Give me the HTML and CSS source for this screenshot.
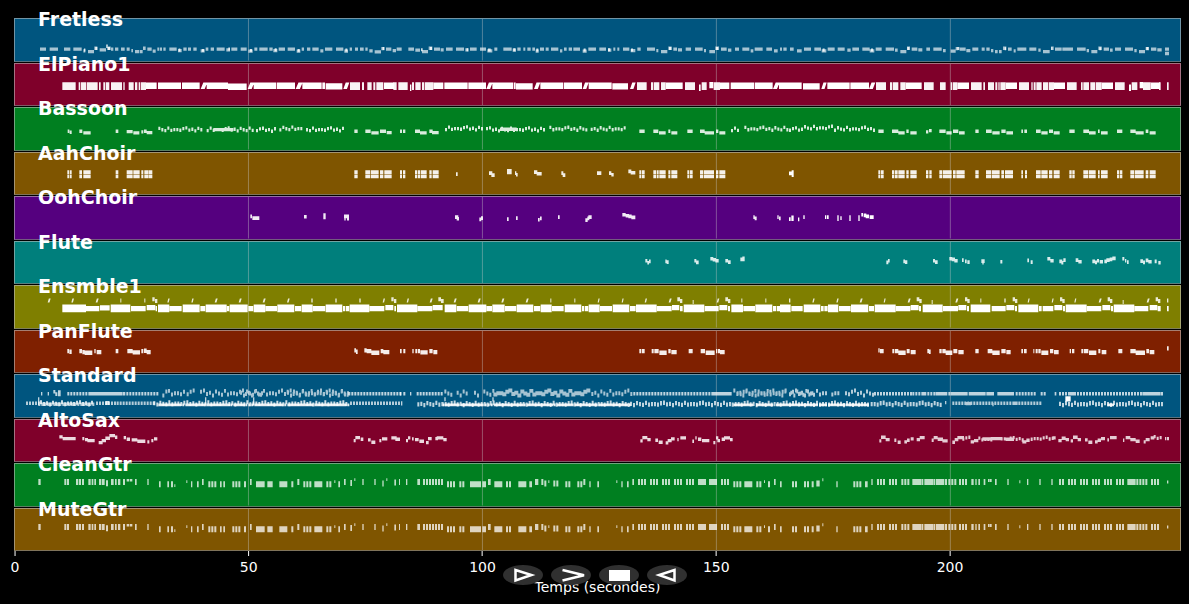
FILE: index.html
```html
<!DOCTYPE html>
<html lang="fr">
  <head>
    <meta charset="UTF-8" />
    <meta name="viewport" content="width=device-width, initial-scale=1.0" />
    <title>Pistes MIDI</title>
    <link rel="stylesheet" href="styles.css">
  </head>
  <body>
    <main class="tracks" id="tracks"></main>

    <footer class="axis">
      <div class="ticks" id="ticks"></div>
      <div class="axis-title">Temps (secondes)</div>
      <div class="controls">
        <button class="control" aria-label="Lecture">
          <svg viewBox="0 0 40 20"><path d="M12.500 5L28.500 10L12.500 15.500Z" /></svg>
        </button>
        <button class="control" aria-label="Avance rapide">
          <svg viewBox="0 0 40 20"><path d="M11.500 5L33 10.200L11.500 15.500" /></svg>
        </button>
        <button class="control" aria-label="Stop">
          <svg viewBox="0 0 40 20"><rect x="10" y="5" width="21" height="11" /></svg>
        </button>
        <button class="control" aria-label="Retour">
          <svg viewBox="0 0 40 20"><path d="M27.500 5L12 10L27.500 15.500Z" /></svg>
        </button>
      </div>
    </footer>

    <script src="script.js"></script>
  </body>
</html>
```
FILE: styles.css
```css
* {
  box-sizing: border-box;
}

body {
  display: flex;
  flex-direction: column;
  height: 100vh;
  margin: 0;
  padding: 18px 8px 0 14px;
  background-color: #000;
  color: #fff;
  font-family: "DejaVu Sans", sans-serif;
  font-size: 14px;
}

.tracks {
  flex: 1;
  min-height: 0;
  display: flex;
  flex-direction: column;
  gap: 1px;
}

.track {
  position: relative;
  flex: 1;
  min-height: 0;
  display: flex;
  flex-direction: column;
  border: 1px solid rgba(190, 190, 190, 0.6);
  border-bottom-color: rgba(128, 128, 128, 0.7);
}

.track-name {
  position: absolute;
  z-index: 1;
  top: -11px;
  left: 23px;
  margin: 0;
  font-size: 19px;
  line-height: 22px;
  font-weight: bold;
}

.notes {
  flex: 1;
  min-height: 0;
  width: 100%;
  display: block;
  fill: #fff;
}

.grid-line {
  fill: rgba(200, 200, 200, 0.4);
}

.blue {
  background-color: #00557f;
}

.red {
  background-color: #7f002a;
}

.green {
  background-color: #007f20;
}

.brown {
  background-color: #7f5500;
}

.purple {
  background-color: #55007f;
}

.teal {
  background-color: #007f7c;
}

.olive {
  background-color: #7f7f00;
}

.rust {
  background-color: #7f2000;
}

.axis {
  position: relative;
  height: 53px;
  flex-shrink: 0;
}

.ticks {
  position: relative;
  height: 28px;
  margin-left: 1px;
}

.tick {
  position: absolute;
  top: 0;
  display: flex;
  flex-direction: column;
  align-items: center;
  transform: translateX(-50%);
  line-height: 16px;
}

.tick::before {
  content: "";
  width: 1px;
  height: 5px;
  margin-bottom: 3px;
  background-color: #fff;
}

.axis-title {
  line-height: 16px;
  text-align: center;
}

.controls {
  position: absolute;
  top: 14px;
  left: -14px;
  right: -8px;
  display: flex;
  justify-content: center;
  gap: 8px;
}

.control {
  width: 40px;
  height: 20px;
  padding: 0;
  border: none;
  border-radius: 50%;
  background-color: #303030;
  cursor: pointer;
}

.control svg {
  display: block;
  width: 40px;
  height: 20px;
}

.control path {
  fill: none;
  stroke: #fff;
  stroke-width: 2.5;
}

.control rect {
  fill: #fff;
}
```
FILE: script.js
```js
// Time scale: 14.04 units per second, origin at 42.
const START = 45;
const WIDTH = 3495;
const HEIGHT = 125;
const DURATION = 249.4;

// The last section of the song, earlier lanes stop here.
const LAST_SECTION = 2367;

// Lane: [offset, y, height, notes, wave, opacity]
// a-b is one held note, a~b is a run of short notes, +n / -n shifts it down / up.
const gtr = [
  [0, 45, 18, "115-122 193-199 201-207 228-235 237-243 246-252 265-272 275-280 283-288 297-304 306-314 318-324+4 333-341 345-350 354-361 369-375 405-410 442-446 477-482+7 502-507+7 513-519+7 573-577+7 591-596+7 606-611 625~650+7 660-665+7 670-675+7 697~722+7 732-738+7 750-755 768~795+7 770-794+7 802~818+7 803-818+7 838~862+7 839-862+7 874-880+7 892-898 910~932+7 943~962+7 944-962+7 979~997+7 1015-1020+7 1032-1037 1051-1056+3 1087-1091 1123-1127 1147-1151+5 1183-1188+2 1197-1200", 0, 0.75],
  [0, 45, 8, "380-387 389-397 559-562+4 1003-1006+4 1063-1066-2 1159-1162-2 523-526+16", 0, 0.75],
  [1200, 45, 18, "18-22 52-60 69~100 105~130 141~167+7 178~192+7 210~240+7 212-238+7 247-258+7 264-272 283~308+7 284-307+7 318~335+7 355~378+7 357-376+7 388-396+7 405-415 424-430 433-439+5 460~478+5 496~508+7 532~542+7 550-556 568-572+7 592-597+7 664-668+7 681-686+7 697-702 714~740 750~775 786~812 822~848 858~884 894~920 896-918 927~953 930-950 963~987 1000~1022+7 1033~1053+7 1034-1052+7 1069~1086+7 1104-1110+7 1122-1127 1140-1145+7 1176~1190+7", 0, 0.75],
  [1200, 49, 8, "445-448 649-652 1092-1095", 0, 0.75],
  [2367, 45, 18, "9~22+7 45~60+7 68-74+7 82-92+5 142-146+7 193~218+7 228-236+7 247-251 264~290 300~326 337~362 370~398 372-396 406~434 408-432 441~470 444-466 478~502 510~536 547-554 559-563 568-573 584-589 618-623 655-659 714-718 751-755 787-791 810~828 837~862 873~900 909~936 945~970 981~1008 1015~1043 1017-1040 1051~1077 1086~1110", 0, 0.75],
  [2367, 45, 9, "100-103-2 597-602 603-608 691-694+4 1134-1138+5", 0, 0.75],
];

const choirRight = "268-274 276-284 309-316 318-326 328-347 352-359 364-383 411-418 421-428 451-460 462-488 492-500 502-527 559-569 591-606 608-632 637-645 648-672 697-702 708-714 741-755 757-776 780-790 794-812 841-848 850-857 883-898 900-920 927-932 936-956 984-991 993-1000 1024-1036 1038-1064 1070-1078 1082-1100";
const choirMid = "0-6 9-16 45-52 54-60 62-80 88-95 98-116 718-724 726-734 760-768 770-776 778-797 805-811 814-832 862-868 870-878 900-910 912-942 948-955 958-976";
const choirLeft = "202-207 209-215 238-246 250-272 347-355 380-398 400-419 424-430 433-444 445-457 1063-1073 1096-1110 1112-1136 1140-1150 1153-1175";

const tracks = [
  { name: "Fretless", color: "blue", lanes: [
    [0, 86, 10, "120-138 149-174 192-211 220-245 250-256+5 264-282+7 283-292-3 299-318+2 318-324-9 324-332-3 333-340 345-355 363-374 380-389 394-399+4 405-418+7 420-428+7 429-437-3 442-455 458-467+6 472-478 480-486 490-497 508-530 534-545+4 550-560 564-573 580-590 602-614+5 617-625 632-642 650-674 679-690+2 694-712 722-740 745-758+6 763-772 778-803 808-818 820-832+4 836-855 863-885 890-901+6 905-912 921-931 937-956 961-970+5 975-997 1008-1030 1033-1044+6 1049-1056 1065-1074 1080-1091 1096-1103 1108-1118+5 1124-1143+8 1144-1153-2 1158-1174 1178-1188+4 1190-1200", 0, 0.65],
    [1200, 86, 10, "0-5 25-42 46-60+3 66-84+7 86-97-3 102-120 122-131+2 138-158 168-192 196-206+2 210-230 240-258 262-277+5 283-292 310-335 338-348+3 352-362 370-376 382-392 397-405 407-416+6 420-432 437-446 453-475 480-487+5 492-500 506-516 520-540 548-560+6 565-588 598-618 624-634+3 640-646 652-658 669-688 692-706+4 712-722 741-765 769-775+4 783-802+7 805-815-3 820-831 834-846+2 857-873 885-908 912-918+4 928-945+7 946-957-3 963-980 984-994+3 1005-1017 1027-1048 1052-1060+5 1064-1088 1099-1116 1122-1133+5 1140-1146 1150-1160", 0, 0.65],
    [2367, 86, 10, "3-14 24-38+5 45-66 76-96 98-112+5 116-137 146-167 175-185+3 190-210 220-242 242-256+5 260-278 290-315 318-326+3 334-352+7 354-363-3 368-385 388-400+2 412-423 433-458 462-470+4 485-500+6 500-508-2 512-530 532-544+4 550-568 578-587 592-602 606-613+4 618-626+7 630-638+7 642-652-3 657-668 674-680+5 685-712 721-742 748-755+3 762-782+7 786-794-3 798-818 820-852 864-890 893-900+4 907-925+7 928-938-3 944-960 963-971+3 978-996 1008-1032 1036-1043+4 1050-1068+7 1070-1080-2 1086-1102 1105-1118+2 1128-1140 1128-1140+13", 0, 0.65],
    [0, 89, 9, "252-256 286-292-5 322-330-5 536-541 606-612+1 685-690-3 750-756+1 824-830-1 893-899+1 1036-1042 1148-1153-5 1263-1268-1 1290-1296-5 1400-1404-1 1464-1472 1540-1546-1 1609-1615 1751-1757 1824-1830-1 1893-1899 2007-2014-5 2148-2154-5 2468-2474 2613-2619 2722-2728-5 2872-2878-5 3014-3018-4 3154-3157-5 3298-3304-4 3439-3445-5", 0, 0.8],
  ] },
  { name: "ElPiano1", color: "red", lanes: [
    [0, 55, 23, "187-227 236-241 243-258 260-293 297-302 310-316 318-328 333-366 370-374 386-401 405-412 416-420 422-438 1050-1080 1086-1092 1102-1115 1120-1126 1129-1150 1180-1190 1195-1200", 0, 0.95],
    [0, 56, 19, "438-470 474-543 546-599 602/622 620-684 684-740+3 743/763 761-828 830-885 887/908 907-965 967-975 977-1027+2 1030/1048 1152-1182"],
    [1200, 55, 23, "0-23 36-42 46-62 66-72 74-100 711-740 753-760 762-778 783-797 855-885 905-920 941-960", 0, 0.95],
    [1200, 56, 19, "30-34+6 100-130 133-203 205-258 259/278 277-340 342-347 348-398+2 402/421 421-490 492-546 548/566 566-628 628-635 637-684+2 690/707 797-848 897-902+6 928-940-2 960-988 992-1063 1065-1118 1119/1139 1137-1200"],
    [2367, 55, 23, "261-291 303-310 312-328 334-350 405-434 453-470 485-489 491-505 546-578 583-588 597-615 619-625 628-632 634-650 690-720 727-731 734-740 742-758 762-778 780-795 834-863 876-881 883-900 904-918 920-938 978-1007 1028-1045 1062-1085 1110-1115 1134-1139", 0, 0.95],
    [2367, 56, 19, "0-38 42-92+2 97/113 115-182 184-240 240/259 350-398 505-540 650-684 795-828 938-972 1020-1026+6 1052-1062-2 1085-1113"],
  ] },
  { name: "Bassoon", color: "green", lanes: [
    [0, 65, 10, "203-208 209-215+3 238-247 250-272+5 347-355 380-398+1 400-418+5 424-430+2 432-440 440-457+4 475~610-5 620~760-5 640-700-5 768~830-4 838~908-8 918~1035-5 1063-1073 1096-1112 1114-1136+5 1140-1158 1160-1175+4", 5, 0.85],
    [1200, 65, 10, "0-6 9-16 45-60 60-80+5 88-98 96-116+4 135~250-8 258~436-5 300-350-6 448~560-7 572~672-7 718-734 760-775 777-797+5 805-811 814-832+5 862-878 900-914 914-942+5 948-955 958-976+5 993~1020-5 1033~1160-7", 5, 0.85],
    [2367, 65, 10, "0~40-5 45~130-10 135~255-7 268-284 309-328 328-347+5 352-359 364-383+5 411-418+2 420-428-2 451-470 472-488+5 492-508 510-527+5 559-569 591-608 610-632+5 637-650 652-672+5 697-702 706-714 741-755 757-776+5 780-792 794-812+5 841-857 883-900 900-920+5 927-932 936-956+5 984-1000 1024-1040 1040-1064+5 1070-1078 1082-1100+5", 5, 0.85],
  ] },
  { name: "AahChoir", color: "brown", lanes: [
    [0, 52, 11, choirLeft, 0, 0.92],
    [0, 65, 11, choirLeft, 0, 0.92],
    [1200, 52, 11, choirMid, 0, 0.92],
    [1200, 65, 11, choirMid, 0, 0.92],
    [2367, 52, 11, choirRight, 0, 0.92],
    [2367, 65, 11, choirRight, 0, 0.92],
    [1200, 58, 11, "168-173 267-277-3 274-284+3 321-335-10 321-335-5 345-349-3 348-353+2 402-412-6 410-425-1 484-490-3 488-496+3 591-604-3 627-634-3 634-641+2 685-694-8 692-706-4", 0, 0.9],
    [2367, 58, 11, "0-8-2 8-14-6 8-14+3"],
  ] },
  { name: "OohChoir", color: "purple", lanes: [
    [0, 55, 11, "751-756-2 757-778+3 912-920-1 970-977-6 970-977+1 1032-1047-2 1033-1037+5 1041-1047+5", 0, 0.92],
    [1200, 55, 11, "165-175 170-177+5 238-244+7 243-249+3 321-326+6 348-353+3 414-419+8 420-425+4 474-479 556-563+9 562-568+4 565-575 667-677-7 677-687-4 685-695-2 694-706+1 1060-1064 1064-1070+4 1132-1136 1137-1142+4", 0, 0.92],
    [2367, 55, 11, "0-5+6 7-14+1 7-14+6 27-31+7 43-47 108-112 114-119 145-149 145-149+6 154-158+3 181-185 181-185+6 208-212 208-212+6 217-222-7 224-232-5 230-240-2 242-254"],
  ] },
  { name: "Flute", color: "teal", lanes: [
    [1200, 53, 11, "736-742-2 742-747+4 747-752 796-800 800-806+2 883-889-2 888-896+3 931-940-8 938-948-5 946-956-2 976-984-2 984-992+2 1021-1034-6 1027-1034-9", 0, 0.85],
    [2367, 53, 11, "292-298+3 297-302-2 343-348 348-355+2 432-438-2 438-446+2 481-490-8 488-498-6 496-506-2 519-524-4 528-533 535-542+2 577-587-1 580-584+4 634-640+1 715-720-3 725-731+2 775-784-8 784-794-2 811-820 817-823+4 823-830-4 860-868-4 868-878+1 910-918 918-924+3 924-930-2 932-942+1 946-954 952-962-4 962-970-6 970-980-9 1000-1006-8 1008-1012-2 1014-1019+2 1054-1062-1 1062-1068+3 1070-1078-3 1078-1088+1 1097-1103 1108-1115+4", 0, 0.85],
  ] },
  { name: "Ensmble1", color: "olive", lanes: [
    [0, 56, 23, "187-258 332-391 474-508 548-599 617-680 689-743 761-796 832-883 905-938 977-1027 1049-1108 1191-1200"],
    [0, 60, 16, "258-298 300-329-2 393-437 440-466-3 467-471 508-545 601-616 680-688 745-760 796-831 885-904 938-976 1029-1036 1038-1048 1108-1153 1156-1180-3 1183-1188"],
    [1200, 56, 23, "0-52 134-169 206-259 277-314 350-400 422-455 494-544 566-599 638-688 708-770 851-913 994-1029 1066-1117 1140-1171"],
    [1200, 60, 16, "52-97 98-128-3 170-205 259-276 315-349 402-421 456-491 546-553 555-565 600-636 690-707 770-815 816-838-3 840-848 914-956 958-982-3 984-990 1030-1065 1119-1128 1130-1140"],
    [2367, 56, 23, "0-5 44-94 117-148 186-238 257-320 401-461 545-604 688-748 830-893 974-1036"],
    [2367, 60, 16, "7-41 96-104 106-116 150-185 240-255 320-364 365-389-3 390-396 462-507 508-532-3 534-540 608-650 652-676-3 678-684 750-758 761-793 796-820-3 822-828 893-937 940-964-3 966-972 1036-1078 1082-1105-3 1106-1115 1134-1139"],
    [0, 38, 12, "143/152 214/222 287/296 361-364 433-436 457-464-4 465-472+1 502/509 574/581 644/653 716/725 788/797 861/869 934-938 1006-1010 1078-1082 1148/1155 1174-1181-4 1182-1189+1", 0, 0.85],
    [1200, 38, 12, "20/27 89/98 115-123-4 123-131+1 161/170 233/242 304/313 377/386 451-454 523-526 593/599 665/671 734/741 806/815 832-840-4 840-847+1 878-881+4 950/958 976-984-4 984-991+1 1024-1027 1096-1099", 0, 0.85],
    [2367, 38, 12, "0-4 70/77 142/149 212/221 284/290 356/365 383-391-4 391-398+1 428-431+4 499/508 528-535-4 535-542+1 574-577 646-650 671-678-4 678-685+1 716/722 788/794 813-820-4 820-827+1 856/862 929/938 956-963-4 963-970+1 1001-1004+4 1073/1082 1100-1107-4 1107-1114+1 1134-1138", 0, 0.85],
  ] },
  { name: "PanFlute", color: "rust", lanes: [
    [0, 54, 13, "202-207 208-215+2 238-246 247-254+3 254-277+5 283-287 290-304+3 347-355 382-398 398-420+4 424-430 432-440-1 440-452+3 1063-1068-2 1068-1073+2 1093-1100-2 1100-1114 1114-1138+5 1142-1150 1150-1168+3", 0, 0.92],
    [1200, 54, 13, "0-5 10-16 37-41 46-52 54-60 61-83+4 88-98 100-112+3 718-723 725-734 755-761 763-776 778-800+5 805-812 814-830+3 866-878 902-915 917-944+5 948-952 954-960 960-974+3", 0, 0.92],
    [2367, 54, 13, "268-272-2 273-284 310-316 318-328 328-350+5 353-362 365-380+3 415-420 420-425+2 451-458 460-470 470-490+5 493-505 508-524+3 559-569 596-610 610-632+5 637-650 652-665+3 697-702 705-713 733-736 740-746 748-755 757-778+5 783-793 795-809+3 842-846 849-856 877-883 885-898 900-922+5 928-934 938-952+3 988-1000 1024-1040 1040-1068+5 1072-1080 1082-1096+3 1134-1139-8", 0, 0.92],
  ] },
  { name: "Standard", color: "blue", lanes: [
    [0, 51, 11, "123-127 143-147 160-166-6 166-172+1 174-182-5 174-182+2 202~270 270~370 274-368 370~474 1045~1200", 0, 0.75],
    [0, 49, 12, "487~498 504~550 560~582 600~1045 720~790 860~1045", 8, 0.65],
    [0, 80, 10, "78~115 115~280+3 288~350 350~460 1050~1200", 0, 0.7],
    [0, 80, 12, "120~280 460~1045 316-328-2", 4, 0.8],
    [0, 86, 8, "475~1045 480-540 556-610 622-690 700-735 765-850 862-940 948-1040", 0, 0.9],
    [0, 67, 24, "114-118 615-619 759-763", 0, 0.75],
    [1200, 51, 11, "0-4 10-16 30-34 50~130 700~935 935~990 940-990", 0, 0.75],
    [1200, 49, 12, "133~160 170~200 222~240 250~700 280~560 1000~1160 1010~1160", 8, 0.65],
    [1200, 81, 13, "3-7-2 52~125 125~690 690~990 995~1160", 4, 0.75],
    [1200, 86, 8, "128~690 135-175 183-250 283-370 380-460 470-520 527-590 600-685 1000-1060 1068-1120 1128-1200", 0, 0.9],
    [1200, 67, 12, "133-137 277-281", 0, 0.75],
    [2367, 51, 11, "255~370 370~480 400-412 440-475 485~585 485-535 540-585 592-615 625-675 680~740 755~768 797-802 810~1118 840-860 1060-1115", 0, 0.75],
    [2367, 49, 12, "0~110 4~75 127~150 168~250", 8, 0.7],
    [2367, 81, 13, "0~240 245~460 810~1118", 4, 0.75],
    [2367, 80, 10, "468-472-2 490~760 530-546+1 610-614+4 675-686", 0, 0.7],
    [2367, 86, 8, "0~240 0-85 95-110 120-170 175-238 955-975", 0, 0.9],
    [2367, 64, 16, "829-845"],
  ] },
  { name: "AltoSax", color: "red", lanes: [
    [0, 49, 10, "178-188-3 188-227+2 247-253+2 255-264+5 262-284+8 296-308+14 305-318+8 316-330+1 328-345-7 345-352-2 371-378-1 380-390+4 395-412+6 412-436+10 442-448+12 454-460+8 462-472+3 1061-1067+8 1066-1080-1 1082-1090+4 1104-1112+6 1114-1126+13 1138-1144+8 1146-1162+3 1174-1190 1186-1200+4", 0, 0.85],
    [1200, 49, 10, "18-24+8 24-31+0 36-41+3 45-56+5 58-72+10 78-86+14 84-95+2 106-114+2 110-130 130-140+5 721-728+9 727-742-1 742-752+5 766-774+7 776-788+13 797-805+15 803-815+8 813-824+3 832-836+5 841-858 877-882+10 886-890 894-904+4 906-928+8 940-946+14 948-955 952-960+8 965-975+4 972-990 990-998+5", 0, 0.85],
    [2367, 49, 10, "271-277+9 276-290-2 290-302+5 316-322+7 326-335+13 346-354+12 354-362+7 365-374+3 383-393+5 392-407-1 428-434+7 434-446-1 446-462+4 460-476+9 490-498+13 497-508+5 505-525-1 520~545+2 545-555+12 555-568+8 568~605+4 580-605+3 605-640+2 635~700+3 650-675+4 700-712+12 712-722+7 725~790+2 790-800 808-818+8 818-830+1 830-840+5 845-852+9 852-866-2 866-876+5 888-896+6 898-910+13 918-926+12 926-936+7 936-948+2 955-960+6 963-983-1 1002-1006+7 1010-1024-1 1024-1040+5 1040-1052+10 1064-1070+12 1070-1082+5 1085-1096 1094~1118 1128-1132+2 1134-1140+2", 4, 0.8],
  ] },
  { name: "CleanGtr", color: "green", lanes: gtr },
  { name: "MuteGtr", color: "brown", lanes: gtr },
];

const WAVE = [0, 0.4, -0.6, -1, 0.3, -0.2, 0.8, -0.7, 0.1, 0.6, -0.9, 0.5, 0];

function drawLane([offset, y, h, notes, wave = 0, opacity = 1]) {
  const limit = offset === 1200 ? LAST_SECTION : START + WIDTH;
  let d = "";
  for (const note of notes.split(" ")) {
    const [, a, kind, b, shift] = note.match(/^(\d+)([-~\/])(\d+)([+-]\d+)?$/);
    const x = offset + Number(a);
    const end = Math.min(offset + Number(b), limit);
    const top = y + Number(shift || 0);
    if (x >= end) continue;
    if (kind === "-") {
      d += `M${x} ${top}H${end}V${top + h}H${x}Z`;
    } else if (kind === "/") {
      const w = (end - x) * 0.6;
      d += `M${x} ${top + h}L${end - w} ${top}H${end}L${x + w} ${top + h}Z`;
    } else {
      let i = x % 13;
      for (let nx = x; nx < end; nx += 9) {
        const ny = top + WAVE[i++ % 13] * wave;
        d += `M${nx} ${ny}h6v${h}h-6Z`;
      }
    }
  }
  return `<path d="${d}" fill-opacity="${opacity}" />`;
}

let gridLines = "";
let ticks = "";
for (let t = 0; t <= 200; t += 50) {
  const x = START - 3 + (t / DURATION) * (WIDTH + 6);
  if (t > 0) {
    gridLines += `<rect class="grid-line" x="${x}" y="0" width="3" height="${HEIGHT}" />`;
  }
  ticks += `<span class="tick" style="left: ${(t / DURATION) * 100}%">${t}</span>`;
}
document.getElementById("ticks").innerHTML = ticks;

document.getElementById("tracks").innerHTML = tracks
  .map(
    (track) => `
      <section class="track ${track.color}">
        <h2 class="track-name">${track.name}</h2>
        <svg class="notes" viewBox="${START} 0 ${WIDTH} ${HEIGHT}" preserveAspectRatio="none">
          ${gridLines}${track.lanes.map(drawLane).join("")}
        </svg>
      </section>`
  )
  .join("");
```
